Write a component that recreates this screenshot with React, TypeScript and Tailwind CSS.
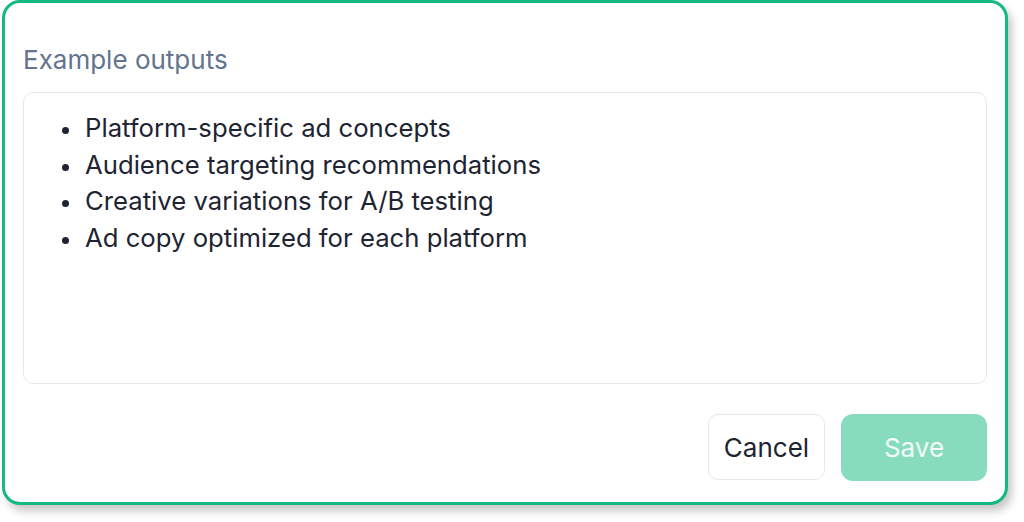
import React from "react";

const outputs = [
    "Platform-specific ad concepts",
    "Audience targeting recommendations",
    "Creative variations for A/B testing",
    "Ad copy optimized for each platform",
];

const App = () => {
    return (
        <div className="w-[1024px] h-[522px] bg-white pl-[2px] font-[family-name:Inter,sans-serif]">
            {/** card */}
            <div className="flex flex-col w-[1006px] h-[505px] bg-white border-[3px] border-[#14b882] rounded-[18px] shadow-[4px_6px_8px_rgba(0,0,0,0.22)] px-[18px] pt-[41px]">
                {/** label */}
                <p className="text-[26px] leading-[32px] text-slate-500">
                    Example outputs
                </p>

                {/** textarea-ish box */}
                <div className="mt-[16px] h-[292px] border border-gray-200 rounded-[10px] pt-[17px] pl-[38px]">
                    <ul>
                        {outputs.map((item, index) => (
                            <li key={index} className="flex items-start text-[25.7px] leading-[36.5px] text-[#1e2432]">
                                <span className="w-[7px] h-[7px] mt-[17px] rounded-full bg-[#1e2432] shrink-0" />
                                <span className="ml-[16px]">{item}</span>
                            </li>
                        ))}
                    </ul>
                </div>

                {/** buttons */}
                <div className="flex justify-end gap-[16px] mt-[30px]">
                    <button className="h-[66px] w-[117px] border border-gray-200 rounded-[10px] bg-white text-[26px] text-[#1e2432]">
                        Cancel
                    </button>
                    <button className="h-[67px] w-[146px] rounded-[12px] bg-[#88dcbe] text-[26px] text-white/90">
                        Save
                    </button>
                </div>
            </div>
        </div>
    );
};

export default App;
